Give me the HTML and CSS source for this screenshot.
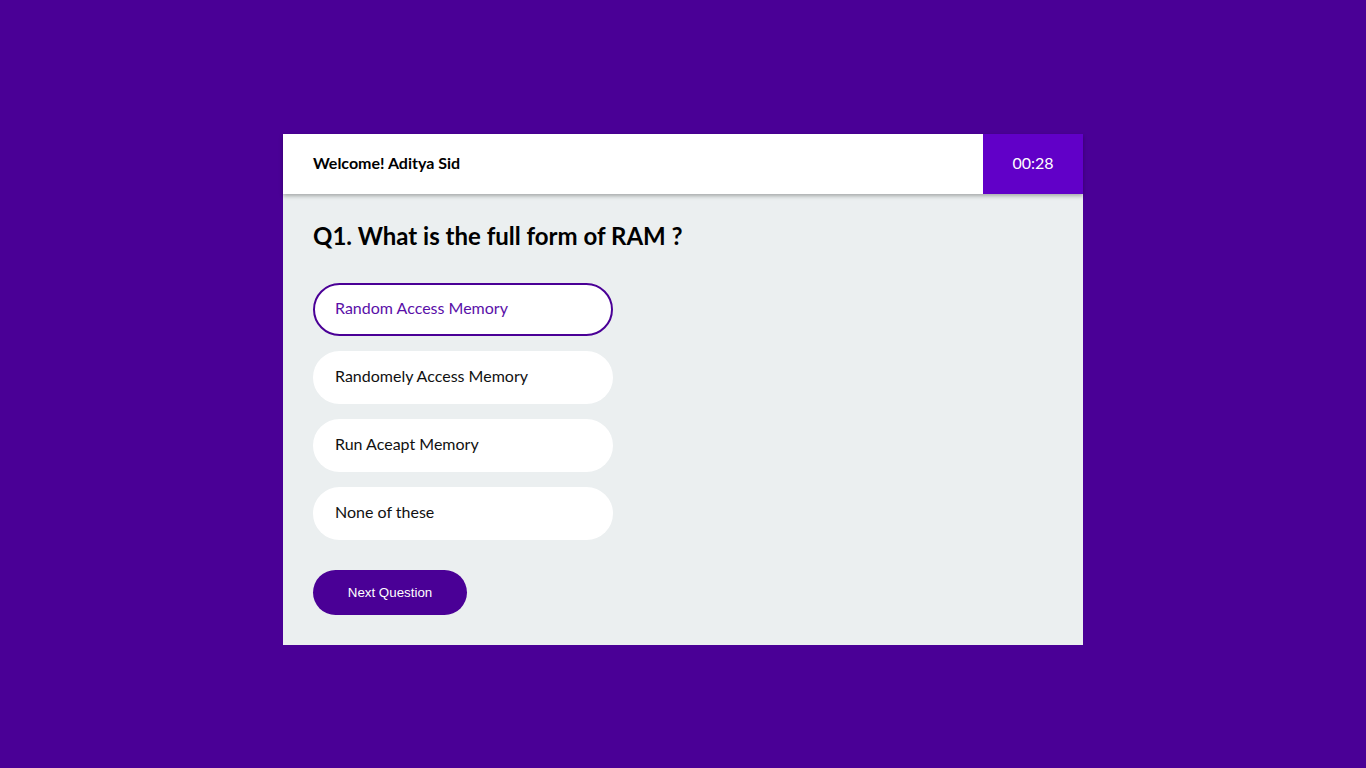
FILE: index.html
```html
<!DOCTYPE html>
<html>
<head>
<meta charset="utf-8">
<link rel="stylesheet" href="styles.css">
</head>
<body>
<div class="page">
  <div class="card">
    <header class="head">
      <div class="welcome">Welcome! Aditya Sid</div>
      <div class="timer">00:28</div>
    </header>
    <main class="body">
      <h2 class="question">Q1. What is the full form of RAM ?</h2>
      <div class="options">
        <div class="option selected">Random Access Memory</div>
        <div class="option">Randomely Access Memory</div>
        <div class="option">Run Aceapt Memory</div>
        <div class="option">None of these</div>
      </div>
      <button class="next">Next Question</button>
    </main>
  </div>
</div>
</body>
</html>
```

FILE: styles.css
```css
html, body {
  margin: 0;
  padding: 0;
  background: #4a0096;
  font-family: Lato, "Noto Sans", sans-serif;
}
.page {
  padding-top: 134px;
  min-height: 768px;
  box-sizing: border-box;
}
.card {
  width: 800px;
  margin: 0 auto;
  background: #ebeff0;
}
.head {
  display: flex;
  height: 60px;
  background: #fff;
  box-shadow: 0 2px 4px rgba(0,0,0,0.3);
  position: relative;
  z-index: 1;
}
.welcome {
  flex: 1;
  display: flex;
  align-items: center;
  padding-left: 30px;
  padding-bottom: 4px;
  font-weight: 700;
  font-size: 16px;
  color: #000;
}
.timer {
  width: 100px;
  background: #6100c8;
  color: #fff;
  font-size: 16px;
  display: flex;
  align-items: center;
  justify-content: center;
  padding-bottom: 4px;
  box-sizing: border-box;
}
.body {
  padding: 27px 30px 30px;
}
.question {
  margin: 0 0 33px;
  font-size: 24px;
  font-weight: 700;
  line-height: 29px;
  color: #000;
}
.options {
  display: flex;
  flex-direction: column;
  gap: 15px;
}
.option {
  width: 300px;
  box-sizing: border-box;
  height: 53px;
  display: flex;
  align-items: center;
  padding: 0 20px 4px;
  border: 2px solid transparent;
  border-radius: 27px;
  background: #fff;
  font-size: 16px;
  color: #111;
}
.option.selected {
  border-color: #4a0096;
  color: #5a0fa8;
}
.next {
  margin-top: 30px;
  width: 154px;
  height: 45px;
  border: none;
  border-radius: 23px;
  background: #4a0096;
  color: #fff;
  font-family: "Liberation Sans", Arial, sans-serif;
  font-size: 13.333px;
  display: block;
}
```
